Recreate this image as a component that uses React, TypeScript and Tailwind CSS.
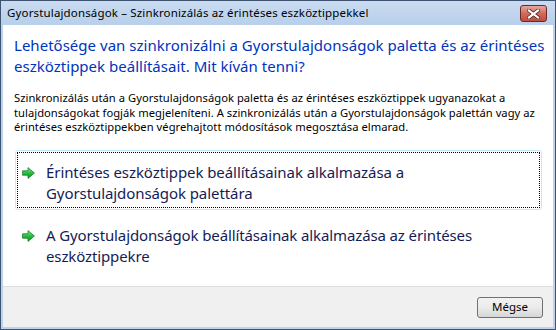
import React from "react";

const font = { fontFamily: '"Noto Sans", "Open Sans", sans-serif' };

function Arrow() {
  return (
    <svg width="13" height="12" viewBox="0 0 13 12" className="shrink-0">
      <defs>
        <linearGradient id="ag" x1="0" y1="0" x2="0" y2="1">
          <stop offset="0" stopColor="#8ee89a" />
          <stop offset="0.5" stopColor="#22c03c" />
          <stop offset="1" stopColor="#0e9024" />
        </linearGradient>
      </defs>
      <path d="M0.6 3.8 H6 V0.6 L12.4 6 L6 11.4 V8.2 H0.6 Z" fill="url(#ag)" stroke="#1a7a2a" strokeWidth="0.8" strokeLinejoin="round" />
    </svg>
  );
}

export default function App() {
  return (
    <div className="w-[556px] h-[330px] bg-[#3d5370] p-px" style={font}>
      <div className="w-full h-full flex flex-col bg-[#bcd3ec]">
        {/* title bar */}
        <div className="h-[24px] flex items-center pl-[6px] pr-[8px] bg-gradient-to-b from-[#c9dbf0] to-[#b8cfea]">
          <div className="flex-1 text-[11.5px] text-black tracking-[0.15px] whitespace-nowrap leading-none">
            Gyorstulajdonságok – Szinkronizálás az érintéses eszköztippekkel
          </div>
          <div className="w-[27px] h-[17px] mt-[1px] rounded-[3px] border border-[#6b2a26] bg-gradient-to-b from-[#e3a89f] via-[#cf6a5c] to-[#c24b3c] flex items-center justify-center">
            <svg width="13" height="10" viewBox="0 0 13 10">
              <path d="M2 1.5 L11 8.5 M11 1.5 L2 8.5" stroke="#5a2a24" strokeWidth="3.8" strokeLinecap="square" />
              <path d="M2 1.5 L11 8.5 M11 1.5 L2 8.5" stroke="#ffffff" strokeWidth="2.2" strokeLinecap="square" />
            </svg>
          </div>
        </div>
        {/* body */}
        <div className="flex-1 mx-[2px] mb-[2px] flex flex-col bg-white">
          <div className="flex-1 bg-white pl-[11px] pr-[12px]">
            <div className="mt-[10px] text-[15px] leading-[21px] text-[#0033bc] tracking-[0.02px] whitespace-nowrap">
              Lehetősége van szinkronizálni a Gyorstulajdonságok paletta és az érintéses
              <br />
              eszköztippek beállításait. Mit kíván tenni?
            </div>
            <div className="mt-[14px] text-[11.2px] leading-[14.5px] text-black tracking-[0.03px] whitespace-nowrap">
              Szinkronizálás után a Gyorstulajdonságok paletta és az érintéses eszköztippek ugyanazokat a
              <br />
              tulajdonságokat fogják megjeleníteni. A szinkronizálás után a Gyorstulajdonságok palettán vagy az
              <br />
              érintéses eszköztippekben végrehajtott módosítások megosztása elmarad.
            </div>
            <div className="mt-[15px] ml-[1px] w-[527px] h-[60px] rounded-[3px] border border-[#c4e7fa] p-px">
              <div className="w-full h-full border border-dotted border-black flex items-start pl-[4px] pt-[9px]">
                <div className="mt-[5px]"><Arrow /></div>
                <div className="ml-[11px] text-[15px] leading-[21px] text-[#151c55] tracking-[-0.08px] whitespace-nowrap">
                  Érintéses eszköztippek beállításainak alkalmazása a
                  <br />
                  Gyorstulajdonságok palettára
                </div>
              </div>
            </div>
            <div className="mt-[5px] ml-[1px] w-[527px] h-[60px] p-[2px] flex items-start pl-[7px] pt-[10px]">
              <div className="mt-[5px]"><Arrow /></div>
              <div className="ml-[11px] text-[15px] leading-[21px] text-[#151c55] tracking-[-0.12px] whitespace-nowrap">
                A Gyorstulajdonságok beállításainak alkalmazása az érintéses
                <br />
                eszköztippekre
              </div>
            </div>
          </div>
          {/* footer */}
          <div className="h-[41px] border-t border-[#dfdfdf] bg-[#f0f0f0] flex items-center justify-end pr-[10px]">
            <button className="w-[66px] h-[21px] rounded-[3px] border border-[#707070] bg-gradient-to-b from-[#f2f2f2] via-[#ebebeb] to-[#d6d6d6] text-[11.5px] text-black leading-none flex items-center justify-center" style={font}>
              Mégse
            </button>
          </div>
        </div>
      </div>
    </div>
  );
}
